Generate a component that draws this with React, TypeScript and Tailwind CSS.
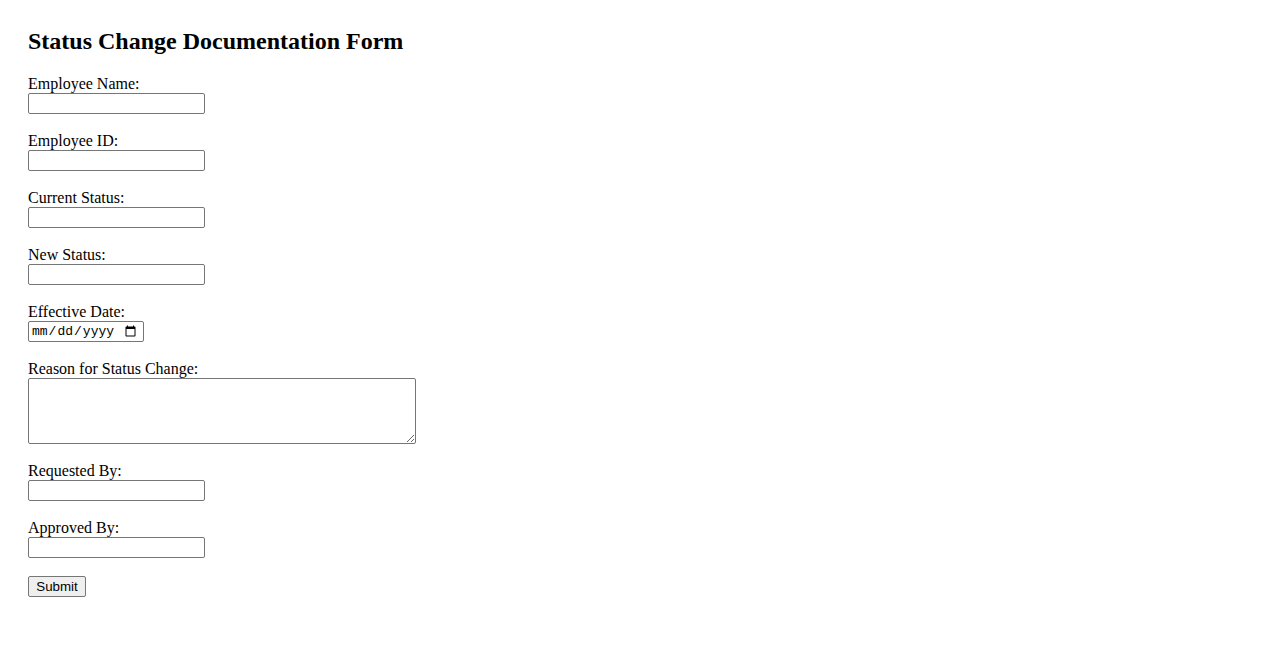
import React from "react";

const serif = { fontFamily: '"Liberation Serif", "Times New Roman", serif' };

function Field({ label, children }: { label: string; children: React.ReactNode }) {
  return (
    <div className="flex flex-col items-start mb-[18px]">
      <label className="block text-[16px] leading-[18px] h-[18px] text-black">{label}</label>
      {children}
    </div>
  );
}

const inputCls =
  "block w-[177px] h-[21px] border border-[#767676] rounded-[2px] bg-white px-[2px] text-[13.33px] outline-none";

export default function App() {
  return (
    <div className="min-h-[650px] bg-white pl-[28px] pt-[28px] text-black" style={serif}>
      <h2 className="text-[24px] font-bold leading-[27px] mb-[20px]">Status Change Documentation Form</h2>
      <form className="flex flex-col items-start" onSubmit={(e) => e.preventDefault()}>
        <Field label="Employee Name:">
          <input type="text" className={inputCls} />
        </Field>
        <Field label="Employee ID:">
          <input type="text" className={inputCls} />
        </Field>
        <Field label="Current Status:">
          <input type="text" className={inputCls} />
        </Field>
        <Field label="New Status:">
          <input type="text" className={inputCls} />
        </Field>
        <Field label="Effective Date:">
          <input
            type="date"
            className="block w-[116px] h-[21px] border border-[#767676] rounded-[2px] bg-white pl-[2px] pr-[4px] text-[13px] leading-[19px] outline-none"
            style={{ fontFamily: '"Liberation Mono", "DejaVu Sans Mono", monospace' }}
          />
        </Field>
        <Field label="Reason for Status Change:">
          <textarea className="block w-[388px] h-[66px] border border-[#767676] rounded-[2px] bg-white p-[2px] text-[13px] outline-none" />
        </Field>
        <Field label="Requested By:">
          <input type="text" className={inputCls} />
        </Field>
        <Field label="Approved By:">
          <input type="text" className={inputCls} />
        </Field>
        <button
          type="submit"
          className="w-[58px] h-[21px] border border-[#767676] rounded-[2px] bg-[#efefef] text-[13.33px] leading-[19px] text-black"
          style={{ fontFamily: '"Liberation Sans", Arial, sans-serif' }}
        >
          Submit
        </button>
      </form>
    </div>
  );
}
